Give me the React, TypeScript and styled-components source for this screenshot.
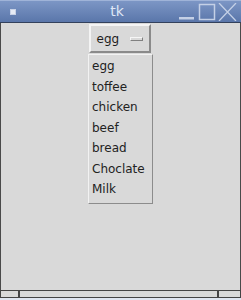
import React from "react";
import styled, { createGlobalStyle } from "styled-components";

const Global = createGlobalStyle`
  html, body { margin: 0; padding: 0; background: #e8ecf4; }
  body { width: 241px; height: 300px; overflow: hidden; }
`;

const Window = styled.div`
  width: 241px;
  height: 300px;
  display: flex;
  flex-direction: column;
  box-sizing: border-box;
  font-family: "DejaVu Sans", sans-serif;
`;

const TitleBar = styled.div`
  height: 21px;
  flex: none;
  display: flex;
  align-items: center;
  background: linear-gradient(#7c96c5, #5a76aa);
  border-top: 1px solid #9fb3d8;
  border-bottom: 1px solid #33415c;
  box-sizing: content-box;
  position: relative;
  padding: 0 4px 0 10px;
`;

const WinIcon = styled.div`
  width: 4px;
  height: 4px;
  background: #e6ebf5;
  border: 1px solid #c8d2e6;
`;

const Title = styled.div`
  flex: 1;
  text-align: center;
  color: #dfe7f6;
  font-size: 14px;
  padding-left: 40px;
  margin-top: -1px;
`;

const Controls = styled.div`
  display: flex;
  align-items: center;
  gap: 2px;
`;

const Content = styled.div`
  flex: 1;
  background: #d9d9d9;
  border-left: 1px solid #4a4a4a;
  border-right: 1px solid #4a4a4a;
  display: flex;
  flex-direction: column;
  align-items: center;
  position: relative;
  padding-top: 1px;
`;

const MenuButton = styled.div`
  width: 62px;
  height: 29px;
  box-sizing: border-box;
  border-top: 2px solid #f4f4f4;
  border-left: 2px solid #f4f4f4;
  border-right: 2px solid #8a8a8a;
  border-bottom: 2px solid #8a8a8a;
  display: flex;
  align-items: center;
  padding-left: 6px;
  gap: 11px;
  font-size: 12px;
  color: #1e1e1e;
  margin-left: -2px;
`;

const Indicator = styled.div`
  width: 13px;
  height: 4px;
  box-sizing: border-box;
  border-top: 1px solid #f6f6f6;
  border-left: 1px solid #f6f6f6;
  border-right: 1px solid #808080;
  border-bottom: 1px solid #808080;
  background: #d9d9d9;
  margin-top: 1px;
`;

const Menu = styled.div`
  position: absolute;
  left: 87px;
  top: 31px;
  width: 65px;
  height: 150px;
  box-sizing: border-box;
  border-top: 1px solid #f2f2f2;
  border-left: 1px solid #f2f2f2;
  border-right: 1px solid #8c8c8c;
  border-bottom: 1px solid #8c8c8c;
  padding-top: 1px;
  display: flex;
  flex-direction: column;
`;

const Item = styled.div`
  height: 20.5px;
  line-height: 20.5px;
  padding-left: 3px;
  font-size: 12px;
  color: #222;
  white-space: nowrap;
`;

const Bottom = styled.div`
  height: 6px;
  flex: none;
  background: #d9d9d9;
  border: 1px solid #444;
  display: grid;
  grid-template-columns: 19px 1fr 21px;
`;

const Seg = styled.div<{ $sep?: boolean }>`
  border-right: ${(p) => (p.$sep ? "2px solid #444" : "none")};
`;

const Tail = styled.div`
  height: 2px;
  flex: none;
  background: #dfe5f0;
`;

const items = ["egg", "toffee", "chicken", "beef", "bread", "Choclate", "Milk"];

export default function App() {
  return (
    <>
      <Global />
      <Window>
        <TitleBar>
          <WinIcon />
          <Title>tk</Title>
          <Controls>
            <svg width="18" height="18" viewBox="0 0 18 18">
              <rect x="1" y="14" width="15" height="2.5" fill="#c4d0e6" />
            </svg>
            <svg width="18" height="18" viewBox="0 0 18 18">
              <rect x="1.5" y="1.5" width="15" height="15" fill="none" stroke="#c4d0e6" strokeWidth="1.5" />
            </svg>
            <svg width="19" height="18" viewBox="0 0 19 18">
              <path d="M1 0 L18 18 M18 0 L1 18" stroke="#c4d0e6" strokeWidth="1.3" fill="none" />
            </svg>
          </Controls>
        </TitleBar>
        <Content>
          <MenuButton>
            <span>egg</span>
            <Indicator />
          </MenuButton>
          <Menu>
            {items.map((t) => (
              <Item key={t}>{t}</Item>
            ))}
          </Menu>
        </Content>
        <Bottom>
          <Seg $sep />
          <Seg $sep />
          <Seg />
        </Bottom>
        <Tail />
      </Window>
    </>
  );
}
